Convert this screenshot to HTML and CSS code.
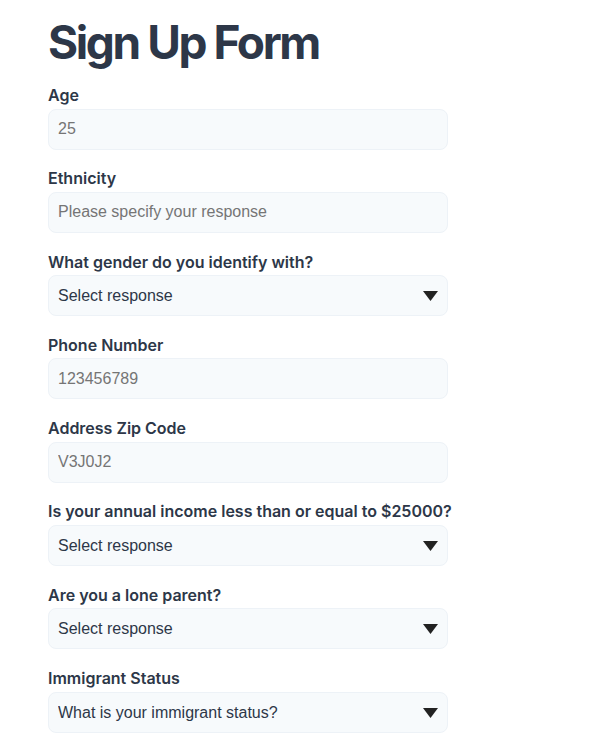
FILE: index.html
```html
<!DOCTYPE html>
<html lang="en">
<head>
<meta charset="utf-8">
<title>Sign Up Form</title>
<link rel="stylesheet" href="styles.css">
</head>
<body>
<main class="page">
  <h1 class="title">Sign Up Form</h1>
  <form class="form">
    <div class="field">
      <label class="label">Age</label>
      <input class="control" type="text" placeholder="25">
    </div>
    <div class="field">
      <label class="label">Ethnicity</label>
      <input class="control" type="text" placeholder="Please specify your response">
    </div>
    <div class="field">
      <label class="label">What gender do you identify with?</label>
      <div class="select-wrap">
        <select class="control select"><option>Select response</option></select>
        <svg class="arrow" width="15" height="10" viewBox="0 0 15 10"><path d="M0 0H15L7.5 10Z" fill="#222"/></svg>
      </div>
    </div>
    <div class="field">
      <label class="label">Phone Number</label>
      <input class="control" type="text" placeholder="123456789">
    </div>
    <div class="field">
      <label class="label">Address Zip Code</label>
      <input class="control" type="text" placeholder="V3J0J2">
    </div>
    <div class="field">
      <label class="label">Is your annual income less than or equal to $25000?</label>
      <div class="select-wrap">
        <select class="control select"><option>Select response</option></select>
        <svg class="arrow" width="15" height="10" viewBox="0 0 15 10"><path d="M0 0H15L7.5 10Z" fill="#222"/></svg>
      </div>
    </div>
    <div class="field">
      <label class="label">Are you a lone parent?</label>
      <div class="select-wrap">
        <select class="control select"><option>Select response</option></select>
        <svg class="arrow" width="15" height="10" viewBox="0 0 15 10"><path d="M0 0H15L7.5 10Z" fill="#222"/></svg>
      </div>
    </div>
    <div class="field">
      <label class="label">Immigrant Status</label>
      <div class="select-wrap">
        <select class="control select"><option>What is your immigrant status?</option></select>
        <svg class="arrow" width="15" height="10" viewBox="0 0 15 10"><path d="M0 0H15L7.5 10Z" fill="#222"/></svg>
      </div>
    </div>
  </form>
</main>
</body>
</html>
```
FILE: styles.css
```css
* { box-sizing: border-box; }
html, body { margin: 0; background: #fff; }
body { font-family: Inter, "Liberation Sans", sans-serif; color: #2d3748; }
.page { padding: 14px 0 0 48px; }
.title {
  margin: 0 0 15px;
  font-size: 46px;
  line-height: 56px;
  font-weight: 700;
  letter-spacing: -2.4px;
  color: #2d3748;
}
.form { display: flex; flex-direction: column; gap: 18.8px; }
.field { display: flex; flex-direction: column; gap: 3.5px; }
.label {
  font-size: 16px;
  line-height: 20px;
  font-weight: 600;
  white-space: nowrap;
  color: #2d3748;
}
.control {
  width: 400px;
  height: 41px;
  margin: 0;
  padding: 0 10px 0 9px;
  font-family: "Liberation Sans", Arial, sans-serif;
  font-size: 16px;
  color: #2d3748;
  background: #f7fafc;
  border: 1px solid #edf2f7;
  border-radius: 8px;
  outline: none;
}
.control::placeholder { color: #757575; opacity: 1; }
.select-wrap { position: relative; width: 400px; }
.select { appearance: none; -webkit-appearance: none; display: block; }
.arrow { position: absolute; right: 10px; top: 16px; pointer-events: none; }
```
